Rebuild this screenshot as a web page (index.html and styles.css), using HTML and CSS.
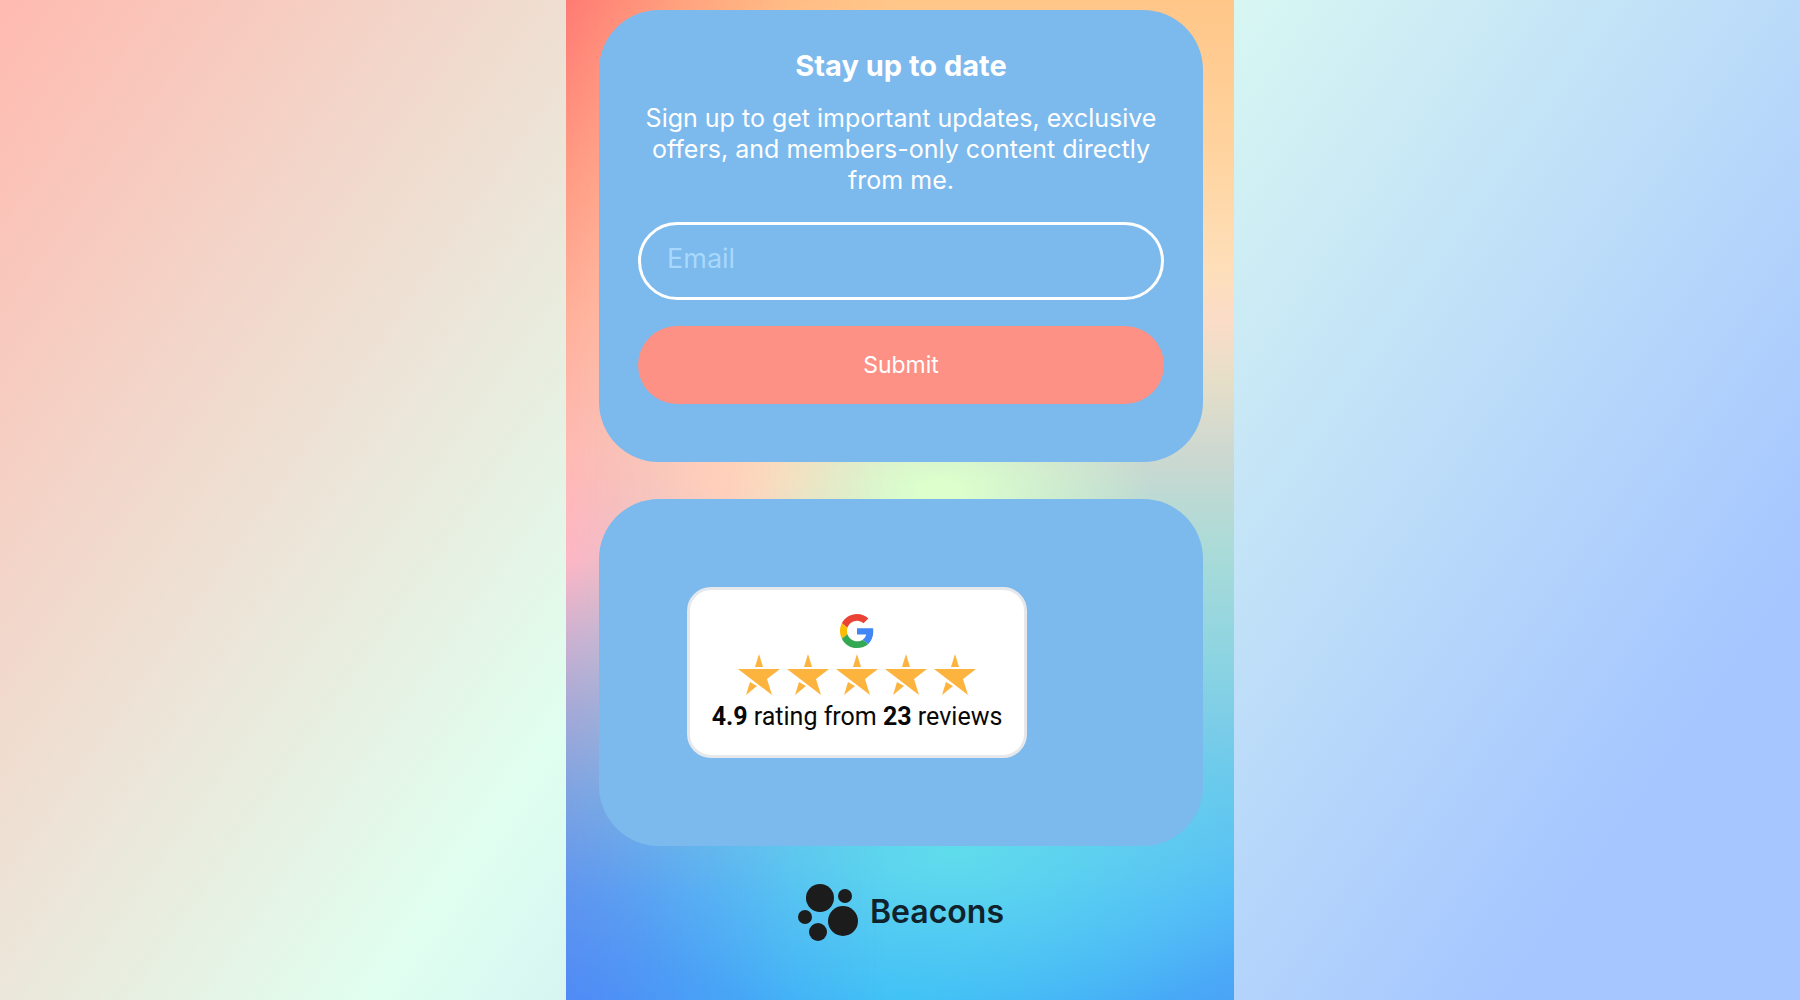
FILE: index.html
```html
<!DOCTYPE html>
<html lang="en">
<head>
    <meta charset="UTF-8">
    <meta name="viewport" content="width=device-width, initial-scale=1.0">
    <title>Beacons</title>
    <link rel="stylesheet" href="styles.css">
</head>
<body>

<svg class="symbols" aria-hidden="true">
    <symbol id="star" viewBox="0 0 42 42">
        <path d="M21 0 L25 13 L17 13 Z M0 15 H42 L29 25 L34 41 Z M12 28 L19 32 L8 41 Z"/>
    </symbol>
</svg>

<main class="page">
    <section class="card signup">
        <h1>Stay up to date</h1>
        <p>Sign up to get important updates, exclusive offers, and members-only content directly from me.</p>
        <form class="signup-form">
            <input type="email" id="email" placeholder="Email" aria-label="Email">
            <button type="submit">Submit</button>
        </form>
    </section>

    <section class="card reviews">
        <div class="rating">
            <svg class="google" viewBox="0 0 48 48" role="img" aria-label="Google">
                <path fill="#EA4335" d="M24 9.5c3.54 0 6.71 1.22 9.21 3.6l6.85-6.85C35.9 2.38 30.47 0 24 0 14.62 0 6.51 5.38 2.56 13.22l7.98 6.19C12.43 13.72 17.74 9.5 24 9.5z"/>
                <path fill="#4285F4" d="M46.98 24.55c0-1.57-.15-3.09-.38-4.55H24v9.02h12.94c-.58 2.96-2.26 5.48-4.78 7.18l7.73 6c4.51-4.18 7.09-10.36 7.09-17.65z"/>
                <path fill="#FBBC05" d="M10.53 28.59c-.48-1.45-.76-2.99-.76-4.59s.27-3.14.76-4.59l-7.98-6.19C.92 16.46 0 20.12 0 24c0 3.88.92 7.54 2.56 10.78l7.97-6.19z"/>
                <path fill="#34A853" d="M24 48c6.48 0 11.93-2.13 15.89-5.81l-7.73-6c-2.15 1.45-4.92 2.3-8.16 2.3-6.26 0-11.57-4.22-13.47-9.91l-7.98 6.19C6.51 42.62 14.62 48 24 48z"/>
            </svg>
            <div class="stars" role="img" aria-label="5 stars">
                <svg><use href="#star"/></svg>
                <svg><use href="#star"/></svg>
                <svg><use href="#star"/></svg>
                <svg><use href="#star"/></svg>
                <svg><use href="#star"/></svg>
            </div>
            <p><strong>4.9</strong> rating from <strong>23</strong> reviews</p>
        </div>
    </section>

    <footer>
        <a class="brand" href="#">
            <svg viewBox="0 0 60 58" aria-hidden="true">
                <circle cx="22" cy="14" r="14"/>
                <circle cx="47" cy="12" r="7"/>
                <circle cx="7" cy="33" r="7"/>
                <circle cx="45" cy="37" r="15"/>
                <circle cx="20" cy="48" r="9"/>
            </svg>
            <span>Beacons</span>
        </a>
    </footer>
</main>

</body>
</html>
```
FILE: styles.css
```css
* {
    box-sizing: border-box;
}
body {
    margin: 0;
    min-height: 100vh;
    display: flex;
    justify-content: center;
    font-family: Inter, "Noto Sans", sans-serif;
    background: linear-gradient(125deg, #ffbab0 0%, #e0fff0 43%, #a5c6ff 88%);
}
h1, p {
    margin: 0;
}
.symbols {
    display: none;
}
.page {
    position: relative;
    isolation: isolate;
    width: 100%;
    max-width: 668px;
    min-height: 100vh;
    padding: 10px 31px 54px 33px;
    background:
        radial-gradient(ellipse 32% 10% at 56% 49%, #dcffcc 10%, rgba(220, 255, 204, 0) 100%),
        radial-gradient(ellipse 32% 12% at 26% 47%, #ffdcbe 20%, rgba(255, 220, 190, 0) 100%),
        radial-gradient(ellipse 55% 18% at 58% 85%, #5fdcec 0%, rgba(95, 220, 236, 0) 100%),
        radial-gradient(ellipse 50% 16% at 50% 100%, #3cbff8 0%, rgba(60, 191, 248, 0) 100%),
        linear-gradient(to bottom, #ffc688 0%, #ffd4a0 16%, #fedfba 27%, #fbdcc8 32%, #e6dfc8 38%, #ced8d0 45%, #aadbd8 55%, #8cd4e2 66%, #68c4ee 80%, #50b4fa 90%, #4aa4f6 100%);
}
/* red to pink to blue down the left side, fading out towards the middle */
.page::before {
    content: "";
    position: absolute;
    inset: 0;
    z-index: -1;
    background: linear-gradient(to bottom, #ff7a74 0%, #ff9882 16%, #ffb09a 32%, #ffb9b2 45%, #ffb5c4 56%, #ccb0d0 64%, #a6a8d6 71%, #7ca2e2 80%, #6096ee 89%, #508af5 100%);
    -webkit-mask-image: linear-gradient(to right, #000 0%, rgba(0, 0, 0, 0.45) 18%, rgba(0, 0, 0, 0.12) 34%, transparent 48%);
    mask-image: linear-gradient(to right, #000 0%, rgba(0, 0, 0, 0.45) 18%, rgba(0, 0, 0, 0.12) 34%, transparent 48%);
}
.card {
    border-radius: 60px;
    background-color: #7cb9ed;
}
.signup {
    padding: 38px 39px 58px;
    color: #fff;
    text-align: center;
}
.signup h1 {
    font-size: 29px;
    line-height: 36px;
}
.signup p {
    margin: 19px 0 26px;
    font-size: 25px;
    line-height: 31px;
}
.signup-form {
    display: flex;
    flex-direction: column;
    gap: 26px;
}
.signup-form input,
.signup-form button {
    width: 100%;
    height: 78px;
    border-radius: 39px;
    color: #fff;
    font-family: inherit;
}
.signup-form input {
    padding: 0 26px 6px;
    border: 3px solid #fff;
    background: transparent;
    font-size: 27px;
}
.signup-form input::placeholder {
    color: #a8d8fc;
    opacity: 1;
}
.signup-form button {
    border: none;
    background-color: #fd9186;
    font-size: 23px;
    cursor: pointer;
}
.reviews {
    margin-top: 37px;
    padding: 88px;
}
.rating {
    width: 340px;
    max-width: 100%;
    min-height: 171px;
    padding-top: 24px;
    border: 3px solid #e6e8ec;
    border-radius: 24px;
    background-color: #fff;
    display: flex;
    flex-direction: column;
    align-items: center;
    color: #080808;
    font-family: Roboto, sans-serif;
}
.google {
    width: 34px;
    height: 34px;
}
.stars {
    margin-top: 6px;
    display: flex;
    gap: 7px;
}
.stars svg {
    width: 42px;
    height: 42px;
    fill: #fdb43f;
}
.rating p {
    margin-top: 6px;
    font-size: 25px;
    line-height: 30px;
    white-space: nowrap;
}
footer {
    margin-top: 38px;
    display: flex;
    justify-content: center;
}
.brand {
    display: flex;
    align-items: center;
    gap: 12px;
    color: #10222b;
    font-size: 32px;
    font-weight: 600;
    text-decoration: none;
}
.brand span {
    padding-bottom: 4px;
}
.brand svg {
    width: 60px;
    height: 58px;
    fill: #1c1c1c;
}
```
